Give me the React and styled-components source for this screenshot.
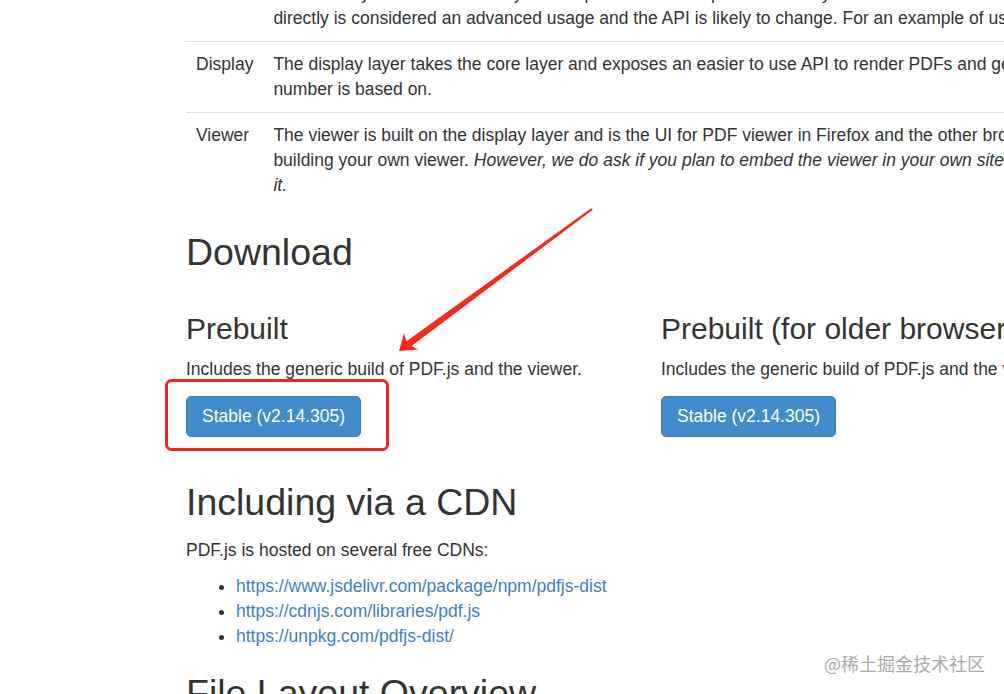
import React from "react";
import styled, { createGlobalStyle } from "styled-components";

const GlobalStyle = createGlobalStyle`
  html, body {
    margin: 0;
    padding: 0;
    overflow: hidden;
    background: #fff;
  }
  body {
    font-family: "Liberation Sans", Arial, Helvetica, sans-serif;
    font-size: 17.5px;
    line-height: 25px;
    color: #333;
  }
`;

const Page = styled.div`
  position: relative;
  width: 1004px;
  height: 694px;
  overflow: hidden;
  background: #fff;
`;

const Content = styled.main`
  padding-left: 186px;
  margin-top: -30px;
`;

const LayerTable = styled.table`
  border-collapse: collapse;
  border-spacing: 0;
  margin: 0;
`;

const Cell = styled.td`
  border-top: 1px solid #ddd;
  padding: 10px 10px 10px;
  vertical-align: top;
  white-space: nowrap;
  text-align: left;
`;

const H2 = styled.h2`
  font-size: 37.5px;
  line-height: 1.1;
  font-weight: 500;
  margin: 24px 0 14px;
  color: #333;
  white-space: nowrap;
`;

const H3 = styled.h3`
  font-size: 30px;
  line-height: 1.1;
  font-weight: 500;
  margin: 25px 0 12px;
  color: #333;
  white-space: nowrap;
`;

const Para = styled.p`
  margin: 0 0 ${(p) => p.$gap || 11}px;
  white-space: nowrap;
`;

const DownloadGrid = styled.div`
  display: grid;
  grid-template-columns: 475px 475px;
  padding-bottom: 21px;
`;

const Column = styled.div`
  min-width: 0;
`;

const PrimaryButton = styled.a`
  display: inline-block;
  padding: 7px 15px;
  border: 1px solid #357ebd;
  background: #428bca;
  color: #fff;
  border-radius: 5px;
  font-size: 17.5px;
  line-height: 25px;
  text-decoration: none;
  white-space: nowrap;
`;

const LinkList = styled.ul`
  margin: 0 0 12px;
  padding-left: 50px;
`;

const LinkItem = styled.li`
  white-space: nowrap;
`;

const Link = styled.a`
  color: #3d7fc1;
  text-decoration: none;
`;

const Watermark = styled.div`
  position: absolute;
  right: 19px;
  top: 651px;
  font-family: "Noto Sans CJK SC", "Liberation Sans", sans-serif;
  font-size: 18px;
  line-height: 24px;
  color: #a9a9a9;
  white-space: nowrap;
`;

const Overlay = styled.svg`
  position: absolute;
  left: 0;
  top: 0;
  width: 1004px;
  height: 694px;
  pointer-events: none;
`;

const layers = [
  {
    name: "Core",
    lines: [
      "The core layer is where a binary PDF is parsed and interpreted. This layer is the foundation for all subsequent layers. It is not documented here because using it",
      "directly is considered an advanced usage and the API is likely to change. For an example of using the core layer see the PDF Object Browser.",
    ],
    label: false,
  },
  {
    name: "Display",
    lines: [
      "The display layer takes the core layer and exposes an easier to use API to render PDFs and get other information from a document. This API is what the version",
      "number is based on.",
    ],
    label: true,
  },
];

export default function App() {
  return (
    <Page>
      <GlobalStyle />
      <Content>
        <LayerTable>
          <tbody>
            {layers.map((l) => (
              <tr key={l.name}>
                <Cell>{l.label ? l.name : ""}</Cell>
                <Cell>
                  {l.lines.map((line, i) => (
                    <React.Fragment key={i}>
                      {i > 0 && <br />}
                      {line}
                    </React.Fragment>
                  ))}
                </Cell>
              </tr>
            ))}
            <tr>
              <Cell>Viewer</Cell>
              <Cell>
                The viewer is built on the display layer and is the UI for PDF viewer in Firefox and the other browser extensions within the project. It can be a good starting point for
                <br />
                building your own viewer.{" "}
                <em>
                  However, we do ask if you plan to embed the viewer in your own site, that it not just be an unmodified version. Please re-skin it or build upon
                  <br />
                  it.
                </em>
              </Cell>
            </tr>
          </tbody>
        </LayerTable>

        <H2>Download</H2>
        <DownloadGrid>
          <Column>
            <H3>Prebuilt</H3>
            <Para $gap={14}>Includes the generic build of PDF.js and the viewer.</Para>
            <PrimaryButton href="#">Stable (v2.14.305)</PrimaryButton>
          </Column>
          <Column>
            <H3>Prebuilt (for older browsers)</H3>
            <Para $gap={14}>Includes the generic build of PDF.js and the viewer.</Para>
            <PrimaryButton href="#">Stable (v2.14.305)</PrimaryButton>
          </Column>
        </DownloadGrid>

        <H2>Including via a CDN</H2>
        <Para>PDF.js is hosted on several free CDNs:</Para>
        <LinkList>
          <LinkItem>
            <Link href="#">https://www.jsdelivr.com/package/npm/pdfjs-dist</Link>
          </LinkItem>
          <LinkItem>
            <Link href="#">https://cdnjs.com/libraries/pdf.js</Link>
          </LinkItem>
          <LinkItem>
            <Link href="#">https://unpkg.com/pdfjs-dist/</Link>
          </LinkItem>
        </LinkList>

        <H2>File Layout Overview</H2>
      </Content>

      <Overlay viewBox="0 0 1004 694">
        <rect
          x="166.5"
          y="380.5"
          width="221"
          height="69"
          rx="5"
          ry="5"
          fill="none"
          stroke="#f02424"
          strokeWidth="3"
        />
        <polygon
          points="399,351 418,349.5 411.5,346 592.8,209.8 591.2,208.2 406.4,341.2 404,333"
          fill="#f52a1c"
        />
      </Overlay>

      <Watermark>@稀土掘金技术社区</Watermark>
    </Page>
  );
}
